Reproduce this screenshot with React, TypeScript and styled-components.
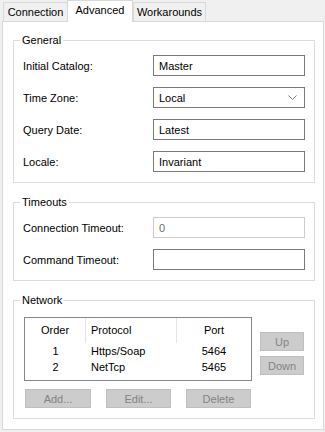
import { FC, Fragment } from "react";
import styled, { createGlobalStyle } from "styled-components";

const GlobalStyle = createGlobalStyle`
  html, body {
    margin: 0;
    padding: 0;
    background: #f0f0f0;
  }
  body {
    font-family: "Liberation Sans", Arial, sans-serif;
    font-size: 11px;
    color: #000;
  }
`;

const Window = styled.div`
  width: 325px;
  height: 432px;
  box-sizing: border-box;
  padding: 0 1px 2px 2px;
  display: flex;
  flex-direction: column;
  background: #f0f0f0;
`;

const TabStrip = styled.div`
  display: flex;
  align-items: flex-end;
  height: 21px;
  padding-left: 1px;
`;

const Tab = styled.div<{ $active?: boolean; $width: number }>`
  box-sizing: border-box;
  width: ${(p) => p.$width}px;
  height: ${(p) => (p.$active ? 22 : 19)}px;
  margin-bottom: ${(p) => (p.$active ? -1 : 0)}px;
  margin-left: ${(p) => (p.$active ? -1 : 0)}px;
  border: 1px solid #d9d9d9;
  border-bottom: none;
  background: ${(p) => (p.$active ? "#ffffff" : "#f0f0f0")};
  position: relative;
  z-index: ${(p) => (p.$active ? 1 : 0)};
  display: flex;
  align-items: center;
  justify-content: center;
  padding-bottom: ${(p) => (p.$active ? 3 : 0)}px;
  line-height: 14px;
`;

const Panel = styled.div`
  flex: 1;
  box-sizing: border-box;
  border: 1px solid #d9d9d9;
  background: #ffffff;
  padding: 11px 8px 8px 10px;
  display: flex;
  flex-direction: column;
  gap: 12px;
`;

const GroupBox = styled.fieldset`
  margin: 0;
  border: 1px solid #dcdcdc;
  padding: 8px 9px 10px 9px;
  min-width: 0;
`;

const Legend = styled.legend`
  margin-left: -3px;
  padding: 0 2px;
  line-height: 14px;
`;

const FormGrid = styled.div`
  display: grid;
  grid-template-columns: 130px 1fr;
  row-gap: 11px;
  align-items: center;
`;

const Label = styled.div`
  line-height: 14px;
`;

const TextBox = styled.div<{ $disabled?: boolean }>`
  box-sizing: border-box;
  height: 21px;
  border: 1px solid ${(p) => (p.$disabled ? "#cccccc" : "#7a7a7a")};
  color: ${(p) => (p.$disabled ? "#6d6d6d" : "#000")};
  background: #fff;
  padding: 0 6px 0 5px;
  display: flex;
  align-items: center;
  justify-content: space-between;
  line-height: 14px;
`;

const Chevron = styled.svg`
  width: 9px;
  height: 6px;
  margin-right: 1px;
`;

const NetworkBody = styled.div`
  display: flex;
  gap: 8px;
  padding-top: 2px;
`;

const LeftColumn = styled.div`
  display: flex;
  flex-direction: column;
  gap: 8px;
  padding-left: 1px;
`;

const ListView = styled.div`
  box-sizing: border-box;
  width: 228px;
  height: 64px;
  border: 1px solid #828790;
  background: #fff;
`;

const ListRow = styled.div<{ $header?: boolean }>`
  display: grid;
  grid-template-columns: 61px 91px 1fr;
  height: ${(p) => (p.$header ? 25 : 16)}px;
  line-height: ${(p) => (p.$header ? 25 : 16)}px;
`;

const Cell = styled.div<{ $align: "left" | "center"; $divider?: boolean }>`
  text-align: ${(p) => p.$align};
  padding-left: ${(p) => (p.$align === "left" ? 5 : 0)}px;
  border-right: ${(p) => (p.$divider ? "1px solid #e5e5e5" : "none")};
  white-space: nowrap;
`;

const ButtonRow = styled.div`
  display: flex;
  gap: 15px;
  padding-left: 1px;
`;

const SideButtons = styled.div`
  display: flex;
  flex-direction: column;
  gap: 5px;
  padding-top: 15px;
`;

const Button = styled.div<{ $width: number }>`
  box-sizing: border-box;
  width: ${(p) => p.$width}px;
  height: 19px;
  border: 1px solid #bfbfbf;
  background: #cccccc;
  color: #838383;
  display: flex;
  align-items: center;
  justify-content: center;
  line-height: 14px;
`;

const generalFields = [
  { label: "Initial Catalog:", value: "Master" },
  { label: "Time Zone:", value: "Local", dropdown: true },
  { label: "Query Date:", value: "Latest" },
  { label: "Locale:", value: "Invariant" },
];

const endpoints = [
  { order: 1, protocol: "Https/Soap", port: 5464 },
  { order: 2, protocol: "NetTcp", port: 5465 },
];

const App: FC = () => {
  return (
    <Window>
      <GlobalStyle />
      <TabStrip>
        <Tab $width={65}>Connection</Tab>
        <Tab $active $width={66}>
          Advanced
        </Tab>
        <Tab $width={73}>Workarounds</Tab>
      </TabStrip>
      <Panel>
        <GroupBox>
          <Legend>General</Legend>
          <FormGrid>
            {generalFields.map((f) => (
              <Fragment key={f.label}>
                <Label>{f.label}</Label>
                <TextBox>
                  <span>{f.value}</span>
                  {f.dropdown && (
                    <Chevron viewBox="0 0 9 6">
                      <polyline points="0.5,0.5 4.5,4.5 8.5,0.5" fill="none" stroke="#808080" strokeWidth="1" />
                    </Chevron>
                  )}
                </TextBox>
              </Fragment>
            ))}
          </FormGrid>
        </GroupBox>
        <GroupBox>
          <Legend>Timeouts</Legend>
          <FormGrid>
            <Label>Connection Timeout:</Label>
            <TextBox $disabled>0</TextBox>
            <Label>Command Timeout:</Label>
            <TextBox />
          </FormGrid>
        </GroupBox>
        <GroupBox>
          <Legend>Network</Legend>
          <NetworkBody>
            <LeftColumn>
              <ListView>
                <ListRow $header>
                  <Cell $align="center" $divider>
                    Order
                  </Cell>
                  <Cell $align="left" $divider>
                    Protocol
                  </Cell>
                  <Cell $align="center">Port</Cell>
                </ListRow>
                {endpoints.map((e) => (
                  <ListRow key={e.order}>
                    <Cell $align="center">{e.order}</Cell>
                    <Cell $align="left">{e.protocol}</Cell>
                    <Cell $align="center">{e.port}</Cell>
                  </ListRow>
                ))}
              </ListView>
              <ButtonRow>
                <Button $width={66}>Add...</Button>
                <Button $width={65}>Edit...</Button>
                <Button $width={65}>Delete</Button>
              </ButtonRow>
            </LeftColumn>
            <SideButtons>
              <Button $width={44}>Up</Button>
              <Button $width={44}>Down</Button>
            </SideButtons>
          </NetworkBody>
        </GroupBox>
      </Panel>
    </Window>
  );
};

export default App;
